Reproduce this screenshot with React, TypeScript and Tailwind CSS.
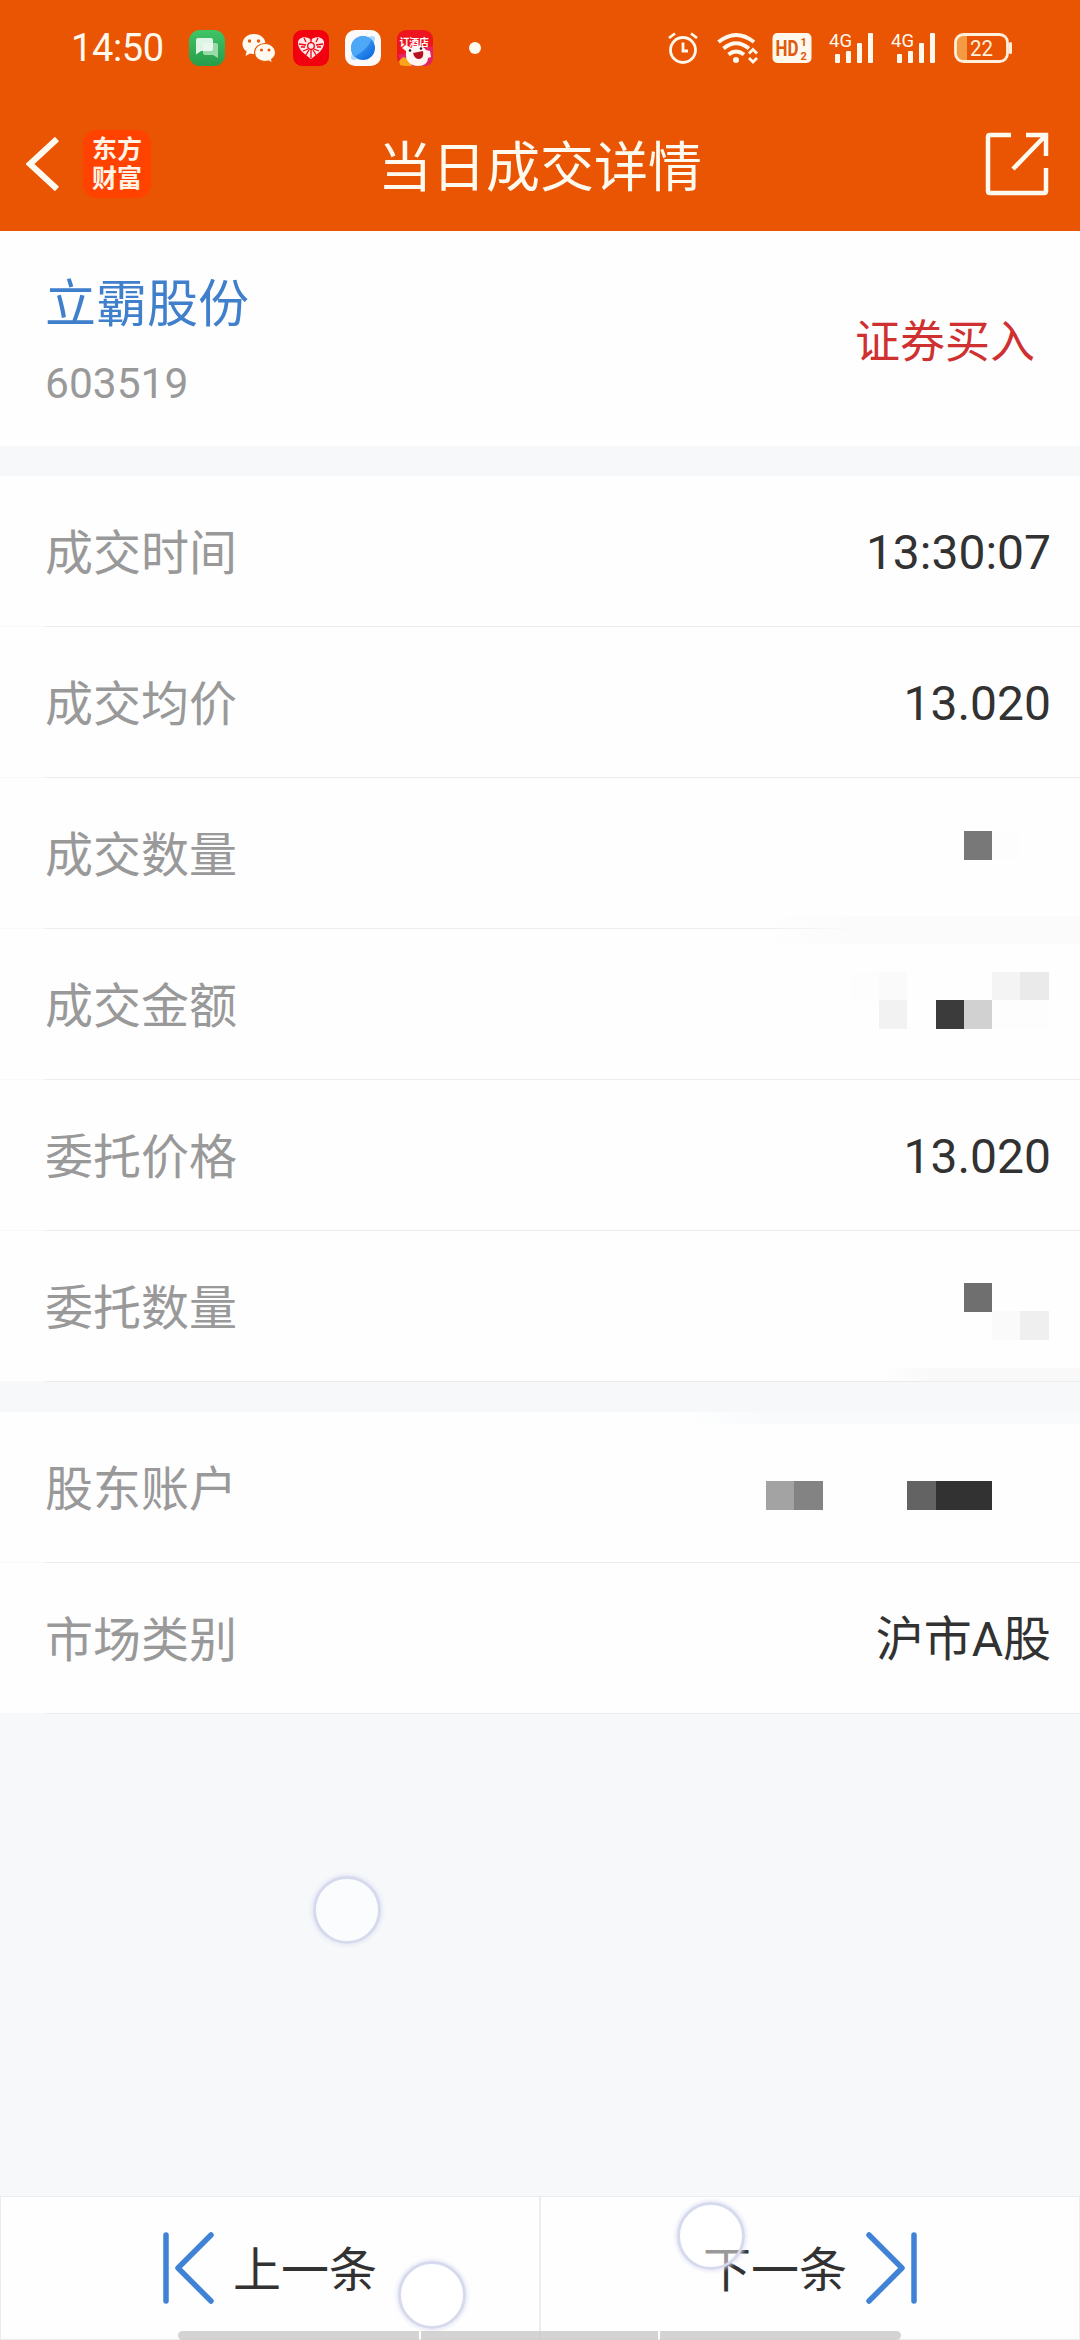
import type { ReactNode } from "react";

interface Block {
  x: number;
  y: number;
  w: number;
  color: string;
}

interface Detail {
  label: string;
  value?: string;
  blocks?: Block[];
}

// Block coordinates are relative to the row's own 380x150 mask area
const tradeDetails: Detail[] = [
  { label: "成交时间", value: "13:30:07" },
  { label: "成交均价", value: "13.020" },
  {
    label: "成交数量",
    blocks: [
      { x: 264, y: 53, w: 28, color: "#787878" },
      { x: 292, y: 53, w: 28, color: "#fdfdfd" },
    ],
  },
  {
    label: "成交金额",
    blocks: [
      { x: 151, y: 43, w: 28, color: "#fdfdfd" },
      { x: 179, y: 43, w: 28, color: "#fafafa" },
      { x: 292, y: 43, w: 28, color: "#f4f4f4" },
      { x: 320, y: 43, w: 29, color: "#eaeaea" },
      { x: 179, y: 71, w: 28, color: "#f2f2f2" },
      { x: 236, y: 71, w: 28, color: "#3b3b3b" },
      { x: 264, y: 71, w: 28, color: "#d1d1d1" },
      { x: 292, y: 71, w: 57, color: "#fdfdfd" },
    ],
  },
  { label: "委托价格", value: "13.020" },
  {
    label: "委托数量",
    blocks: [
      { x: 264, y: 52, w: 28, color: "#6f6f6f" },
      { x: 292, y: 80, w: 28, color: "#fafafa" },
      { x: 320, y: 80, w: 29, color: "#efefef" },
    ],
  },
];

const accountDetails: Detail[] = [
  {
    label: "股东账户",
    blocks: [
      { x: 66, y: 69, w: 28, color: "#a3a3a3" },
      { x: 94, y: 69, w: 29, color: "#838383" },
      { x: 207, y: 69, w: 29, color: "#636363" },
      { x: 236, y: 69, w: 56, color: "#323232" },
    ],
  },
  { label: "市场类别", value: "沪市A股" },
];

const DetailRow = ({ label, value, blocks }: Detail) => (
  <div>
    <div className="flex h-[150px] items-center justify-between pl-[45px]">
      <span className="pt-1.5 text-[48px] leading-none text-[#999999]">{label}</span>
      {value && <span className="pt-1 pr-[29px] text-[48px] leading-none text-[#323232]">{value}</span>}
      {blocks && (
        <svg width="380" height="150" viewBox="0 0 380 150" shapeRendering="crispEdges">
          {blocks.map((b) => (
            <rect key={`${b.x}-${b.y}`} x={b.x} y={b.y} width={b.w} height="28.5" fill={b.color} />
          ))}
        </svg>
      )}
    </div>
    {/* Divider is fainter under the left inset */}
    <div className="flex h-px">
      <div className="w-[45px] bg-[#f8f8f8]" />
      <div className="flex-1 bg-[#ececec]" />
    </div>
  </div>
);

const SignalIcon = () => (
  <svg width="46" height="44" viewBox="0 -6 46 44" fill="#fff8ec">
    <text x="0" y="14.500" fontSize="19" fontFamily="Roboto" textLength="23" lengthAdjust="spacingAndGlyphs">
      4G
    </text>
    <rect x="6" y="22" width="5" height="9" rx="1" />
    <rect x="17" y="19" width="5" height="12" rx="1" />
    <rect x="28" y="11" width="5" height="20" rx="1" />
    <rect x="39" y="1" width="5" height="30" rx="1" />
  </svg>
);

const NotificationIcons = () => (
  <svg width="310" height="40" viewBox="0 0 310 40">
    <defs>
      <linearGradient id="msg" x1="0" y1="0" x2="0" y2="1">
        <stop offset="0" stopColor="#3fc566" />
        <stop offset="1" stopColor="#279c4a" />
      </linearGradient>
      <linearGradient id="planet" x1="0" y1="0" x2="1" y2="1">
        <stop offset="0" stopColor="#5ab7fb" />
        <stop offset="1" stopColor="#0560dc" />
      </linearGradient>
    </defs>
    {/* messages */}
    <rect x="0" y="2" width="36" height="36" rx="11" fill="url(#msg)" />
    <path d="M14 15h13q2 0 2 2v13l-5-3H16q-2 0-2-2z" fill="#9adbaa" />
    <path d="M9 10h13q2 0 2 2v9q0 2-2 2H12l-5 3.500V12q0-2 2-2z" fill="#f1fbf3" fillOpacity="0.9" />
    {/* wechat */}
    <path d="M65 6c-7 0-11.500 4.500-11.500 10 0 3.200 1.600 5.800 4.100 7.600L56.500 28l4.600-2.400c1.300.4 2.600.5 3.900.5 7 0 11.500-4.600 11.500-10.100S72 6 65 6z" fill="#fffaf0" />
    <circle cx="60.500" cy="13" r="1.700" fill="#e95503" />
    <circle cx="69.500" cy="13" r="1.700" fill="#e95503" />
    <path d="M76 15.500c-6 0-10.500 4-10.500 9s4.500 9 10.500 9c1.300 0 2.400-.2 3.500-.5l4 2.200-.9-3.800c2.500-1.700 4-4.100 4-6.900 0-5-4.600-9-10.600-9z" fill="#fffaf0" stroke="#e95503" strokeWidth="1.200" />
    <circle cx="72.500" cy="22" r="1.500" fill="#e95503" />
    <circle cx="80" cy="22" r="1.500" fill="#e95503" />
    {/* heart */}
    <rect x="104" y="2" width="36" height="36" rx="9" fill="#f2000f" />
    <path d="M122 12c-3-4-12-4-13 2-.5 8 7 12 13 17 6-5 13.500-9 13-17-1-6-10-6-13-2z" fill="#ffe9e9" />
    <path
      d="M122 11v4M122 21v9M110 16l7 1M134 16l-7 1M114 23l5-2M130 23l-5-2M115 10l2 4M129 10l-2 4M117 27l3-5M127 27l-3-5M112 19h4M128 19h4"
      stroke="#f2000f"
      strokeWidth="1.300"
    />
    <circle cx="122" cy="18" r="3.300" fill="none" stroke="#f2000f" strokeWidth="1.300" />
    {/* browser */}
    <rect x="156" y="2" width="36" height="36" rx="10" fill="#fbfaf8" />
    <ellipse cx="174" cy="20" rx="16" ry="5.500" fill="#a9d9fb" transform="rotate(-45 174 20)" />
    <circle cx="174" cy="20" r="12" fill="url(#planet)" />
    <path d="M165.500 28.500A12 12 0 0 1 182.500 11.500Q179 21 165.500 28.500z" fill="#4da8f8" />
    {/* hotel booking */}
    <rect x="208" y="2" width="36" height="36" rx="9" fill="#ee1420" />
    <path d="M209 27c3 8 8 11 15 11h11c6 0 9-4 9-9V18z" fill="#e52266" />
    <path d="M211 37l-1-4 4-4 6 2 3 7h-8z" fill="#f8a51b" />
    <path d="M217 23l-4-3 4-3 5 3c4-4 12-3 15 2l4 1 1 6-3 1c0 5-4 8-10 8-7 0-12-5-12-10z" fill="#fff6f2" />
    <path d="M224 25l10-2c1 5-1 8-4 8-3 0-5-2-6-6z" fill="#b51220" />
    <circle cx="221" cy="22.500" r="1.300" fill="#222" />
    <circle cx="232" cy="20.500" r="1.300" fill="#222" />
    <text x="210.500" y="17.500" fontSize="9.800" fontWeight="700" fill="#fff" fontFamily="Noto Sans CJK SC">
      订酒店
    </text>
    <circle cx="286" cy="20" r="6" fill="#fffaf0" />
  </svg>
);

const StatusBar = () => (
  <div className="flex h-24 items-center justify-between pr-[67px] pl-[71px] text-[#fff8ec]">
    <div className="flex items-center">
      <span className="w-[118px] text-[38px] leading-none tracking-[-0.400px]">14:50</span>
      <NotificationIcons />
    </div>
    <div className="flex items-center">
      <svg width="30" height="32" viewBox="0 0 30 32" fill="none" stroke="#fff8ec" strokeWidth="2.800">
        <circle cx="15" cy="18" r="12.500" />
        <path d="M15 10.500V19h5M1 6l6-4.500M29 6l-6-4.500" />
      </svg>
      <svg className="ml-[19px]" width="42" height="32" viewBox="0 0 42 32" fill="none" stroke="#fff8ec" strokeWidth="4">
        <path d="M1.500 10Q19-4 37 10M6.500 16.500Q19 6 32 16.500M11.500 22.500Q19 16.500 27 22.500" />
        <circle cx="19" cy="28" r="3" fill="#fff8ec" stroke="none" />
        <path d="M32 21.500l4-4 4 4M32 26l4 4 4-4" strokeWidth="2.800" />
      </svg>
      <svg className="ml-[13px]" width="40" height="32" viewBox="0 0 40 32">
        <rect x="0.500" y="1" width="39" height="30" rx="5" fill="#fff8ec" />
        <text x="3.500" y="24" fontSize="22" fontWeight="700" fill="#e0590c" fontFamily="Roboto" textLength="23" lengthAdjust="spacingAndGlyphs">
          HD
        </text>
        <text x="28.500" y="14" fontSize="11" fontWeight="700" fill="#e0590c" fontFamily="Roboto">
          1
        </text>
        <text x="28.500" y="27.500" fontSize="11" fontWeight="700" fill="#e0590c" fontFamily="Roboto">
          2
        </text>
      </svg>
      <div className="ml-[17px] flex gap-4">
        <SignalIcon />
        <SignalIcon />
      </div>
      <svg className="ml-4" width="60" height="32" viewBox="0 0 60 32">
        <path d="M14 3H10Q4 3 4 9v14q0 6 6 6h4z" fill="#f49a42" />
        <rect x="2.500" y="2.500" width="52" height="27" rx="8" fill="none" stroke="#fff0dc" strokeWidth="2.800" />
        <rect x="56" y="10" width="3" height="12" rx="1.500" fill="#fff0dc" />
        <text x="17" y="23.500" fontSize="21.500" fill="#fff0dc" fontFamily="Roboto" textLength="23" lengthAdjust="spacingAndGlyphs">
          22
        </text>
      </svg>
    </div>
  </div>
);

const TitleBar = () => (
  <div className="grid h-[135px] grid-cols-[1fr_auto_1fr] items-center px-[26px]">
    <div className="flex items-center gap-[23px]">
      <svg width="34" height="56" viewBox="0 0 34 56" fill="none" stroke="#fffaf0" strokeWidth="6">
        <path d="M31 3L4 28l27 25" />
      </svg>
      <div className="flex h-[68px] w-[68px] flex-col items-center justify-center rounded-[14px] bg-[#ff4200] text-[25px] leading-[29px] font-bold text-[#fff3e6]">
        <span>东方</span>
        <span>财富</span>
      </div>
    </div>
    <h1 className="pt-2.5 text-[54px] leading-none text-[#fffaf0]">当日成交详情</h1>
    <svg className="mr-[5px] justify-self-end" width="64" height="64" viewBox="0 0 64 64" fill="none" stroke="#fffaf0" strokeWidth="4.500">
      <path d="M26 3H5q-2 0-2 2v54q0 2 2 2h54q2 0 2-2V36M41 3h20v21M61 3L28 37" />
    </svg>
  </div>
);

const StepIcon = ({ flip }: { flip?: boolean }) => (
  <svg
    className={flip ? "-scale-x-100" : ""}
    width="52"
    height="72"
    viewBox="0 0 52 72"
    fill="none"
    stroke="#3f82d6"
    strokeWidth="5.500"
    strokeLinecap="round"
  >
    <path d="M3 3v66M48 3L15 36l33 33" strokeLinejoin="round" />
  </svg>
);

const TouchRing = ({ className }: { className: string }) => (
  <div
    className={`absolute h-[68px] w-[68px] rounded-full border-3 border-[#d6daec] bg-white/50 shadow-[0_0_4px_1px_#e0e3f5] ${className}`}
  />
);

const Section = ({ children }: { children: ReactNode }) => <div className="bg-[#fefefe]">{children}</div>;

export default function App() {
  return (
    <div className="relative flex h-[2340px] w-[1080px] flex-col overflow-hidden bg-[#f6f8fa] font-['Roboto','Noto_Sans_CJK_SC',sans-serif]">
      <header className="h-[231px] bg-[#e95503]">
        <StatusBar />
        <TitleBar />
      </header>

      {/* Security summary */}
      <div className="flex h-[215px] items-center justify-between bg-[#fefefe] pt-[7px] pr-[45px] pl-[45px]">
        <div className="flex flex-col gap-[33px]">
          <span className="text-[51px] leading-none text-[#3f7fcb]">立霸股份</span>
          <span className="text-[42.500px] leading-none text-[#999999]">603519</span>
        </div>
        <span className="text-[45px] leading-none text-[#cf3130]">证券买入</span>
      </div>

      <main className="mt-[30px] flex flex-1 flex-col gap-[30px]">
        <Section>
          {tradeDetails.map((d) => (
            <DetailRow key={d.label} {...d} />
          ))}
        </Section>
        <Section>
          {accountDetails.map((d) => (
            <DetailRow key={d.label} {...d} />
          ))}
        </Section>
      </main>

      {/* Previous / next record */}
      <footer className="flex h-36 border border-[#ececec] bg-[#fefefe] text-[48px] leading-none text-[#323232]">
        <div className="flex flex-1 items-center justify-center gap-[18px] border-r border-[#ececec]">
          <StepIcon />
          <span className="pt-1.5">上一条</span>
        </div>
        <div className="flex flex-1 items-center justify-center gap-[18px] border-l border-[#ececec]">
          <span className="pt-1.5">下一条</span>
          <StepIcon flip />
        </div>
      </footer>

      {/* Smears left by the masking brush */}
      <div className="absolute top-[916px] right-0 h-7 w-[320px] bg-linear-to-r from-transparent to-[#fbfbfb] to-30%" />
      <div className="absolute top-[1368px] right-0 h-[13px] w-[200px] bg-linear-to-r from-transparent to-[#f9f9fa] to-25%" />
      <div className="absolute top-[1412px] right-0 h-3 w-[390px] bg-linear-to-r from-transparent to-[#f8fafc] to-20%" />

      <TouchRing className="top-[1876px] left-[313px]" />
      <TouchRing className="top-[2261px] left-[398px]" />
      <TouchRing className="top-[2202px] left-[677px]" />

      {/* Gesture bar */}
      <div className="absolute bottom-0 left-[178px] flex h-[9px] w-[723px] gap-0.5 overflow-hidden rounded-full">
        <div className="w-[241px] bg-[#c8c8c8]/80" />
        <div className="w-[237px] bg-[#c8c8c8]/80" />
        <div className="flex-1 bg-[#c8c8c8]/80" />
      </div>
    </div>
  );
}
